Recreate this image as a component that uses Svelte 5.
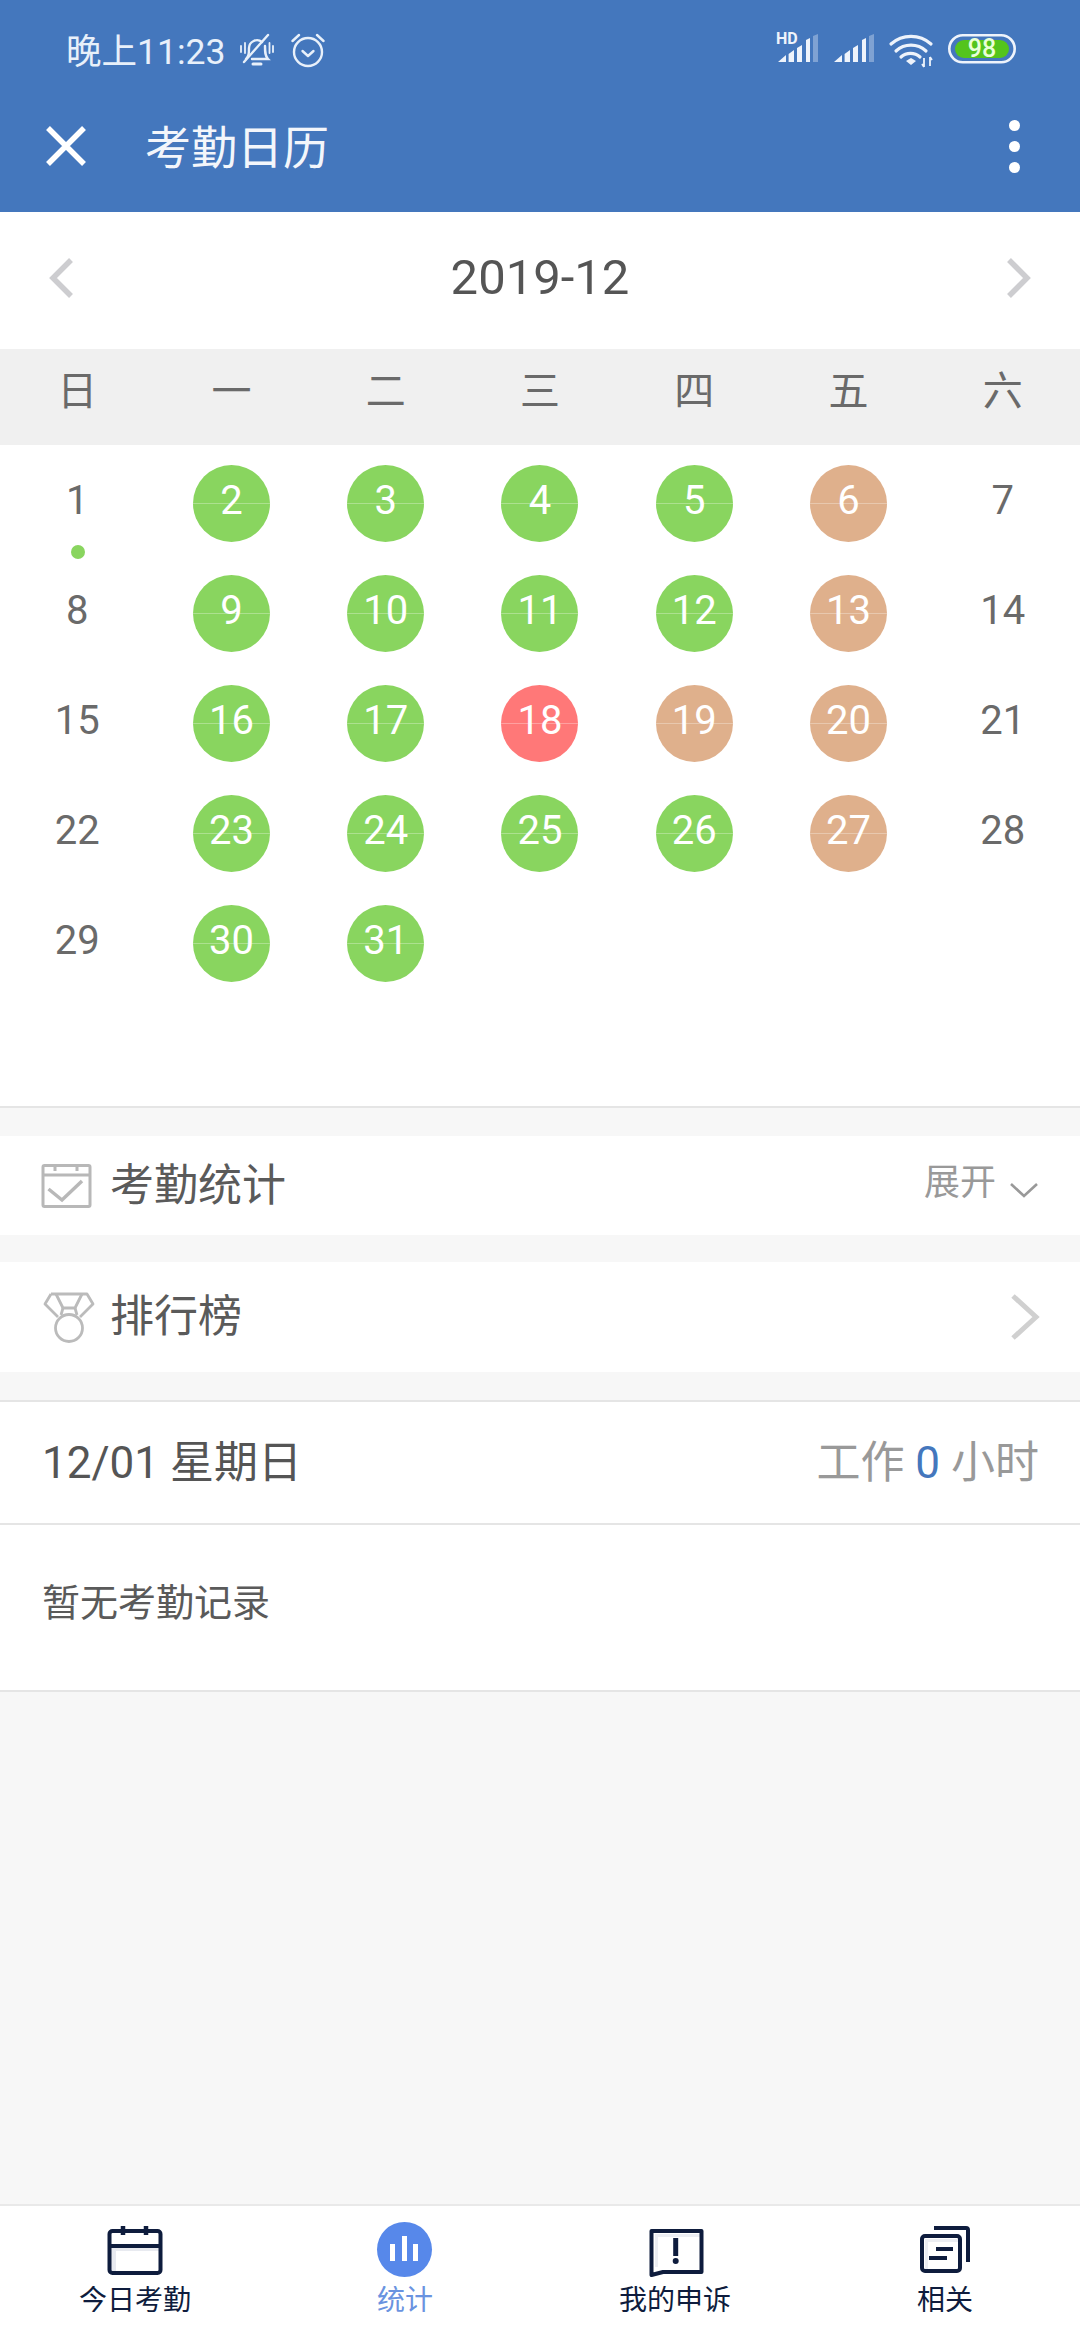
<script>
  const weekdays = ['日', '一', '二', '三', '四', '五', '六'];
  const marks = {
    2:'g',3:'g',4:'g',5:'g',6:'t',9:'g',10:'g',11:'g',12:'g',13:'t',
    16:'g',17:'g',18:'r',19:'t',20:'t',23:'g',24:'g',25:'g',26:'g',27:'t',30:'g',31:'g'
  };
  const days = Array.from({ length: 31 }, (_, i) => i + 1);
</script>

<div class="page">
  <header class="top">
    <div class="status">
      <div class="status-left">
        <span class="clock">晚上11:23</span>
        <svg class="bell" width="34" height="34" viewBox="0 0 34 34" fill="none" stroke="#e8f0fa" stroke-width="2.400" stroke-linecap="round">
          <path d="M6 26c3-3 3-6 3-11a8 8 0 0 1 13-6M25 13c0 6 0 10 3 13H12"/>
          <path d="M13 31h8" stroke-width="3"/>
          <path d="M4 29 28 2"/>
          <path d="M1 13v6M5 10v10M29.500 10v10M33 13v6" stroke-width="1.800"/>
        </svg>
        <svg class="alarm" width="34" height="36" viewBox="0 0 34 36" fill="none" stroke="#e8f0fa" stroke-width="2.400" stroke-linecap="round" stroke-linejoin="round">
          <circle cx="17" cy="20" r="14"/>
          <path d="m11.500 19 5.500 5 5.500-5"/>
          <path d="M1.500 9 8 3M32.500 9 26 3"/>
        </svg>
      </div>
      <svg class="status-right" width="242" height="40" viewBox="0 0 242 40">
        <text x="0" y="14" class="hd">HD</text>
        <g fill="#eef3fb">
          <path d="M2 32l8-7v7zM12.600 24l5.400-4v12h-5.400zM21 18l5-3v17h-5zM30 10l4-2v24h-4z"/>
          <path d="M37 6l5-2v28h-5z" opacity=".35"/>
          <path d="M58 32l8-7v7zM68.600 24l5.400-4v12h-5.400zM77 18l5-3v17h-5zM86 10l4-2v24h-4z"/>
          <path d="M93 6l5-2v28h-5z" opacity=".35"/>
        </g>
        <g fill="none" stroke="#eef3fb" stroke-width="3.200" stroke-linecap="round">
          <path d="M115 14a30 30 0 0 1 40 0"/>
          <path d="M120 21a22 22 0 0 1 30 0"/>
          <path d="M125 27a14 14 0 0 1 19 0"/>
        </g>
        <path d="M130 31l5-3 5 3-5 4z" fill="#eef3fb"/>
        <path d="M148 28v9M146 34l2 3M154 27v9M154 27l2 3" stroke="#eef3fb" stroke-width="1.800" fill="none"/>
        <rect x="173.300" y="5.300" width="65.400" height="27" rx="13.500" fill="none" stroke="#eef3fb" stroke-width="2.600"/>
        <rect x="179" y="10" width="54" height="18" rx="9" fill="#54c41c"/>
        <text x="206" y="27" text-anchor="middle" class="batt">98</text>
      </svg>
    </div>
    <div class="titlebar">
      <svg class="close" width="40" height="40" viewBox="0 0 40 40" stroke="#fff" stroke-width="5.500"><path d="M2 2l36 36M38 2 2 38"/></svg>
      <h1>考勤日历</h1>
      <div class="more"><i></i><i></i><i></i></div>
    </div>
  </header>

  <section class="month">
    <svg width="24" height="40" viewBox="0 0 24 40" fill="none" stroke="#cdcdd0" stroke-width="5.500"><path d="M22 2 4 20l18 18"/></svg>
    <span>2019-12</span>
    <svg width="24" height="40" viewBox="0 0 24 40" fill="none" stroke="#cdcdd0" stroke-width="5.500"><path d="m2 2 18 18L2 38"/></svg>
  </section>

  <div class="weekdays">
    {#each weekdays as w}<span>{w}</span>{/each}
  </div>

  <section class="days">
    {#each days as d}
      <div class="cell">
        <div class="day {marks[d] || ''}"><span>{d}</span></div>
        {#if d === 1}<i class="dot"></i>{/if}
      </div>
    {/each}
  </section>

  <section class="row stats">
    <svg class="row-icon" width="52" height="46" viewBox="0 0 52 46" fill="none" stroke="#b8b8b8" stroke-width="3">
      <rect x="3" y="2.500" width="47" height="41" rx="1.500"/>
      <path d="M3 12h47M15 2v6M37 2v6"/>
      <path d="m8.500 26 13.500 11L42 18" stroke-width="3.500"/>
    </svg>
    <span class="row-title">考勤统计</span>
    <span class="expand">展开</span>
    <svg class="down" width="28" height="16" viewBox="0 0 28 16" fill="none" stroke="#999" stroke-width="2.600"><path d="m1 2 13 12L27 2"/></svg>
  </section>

  <section class="row rank">
    <svg class="row-icon" width="52" height="52" viewBox="0 0 52 52" fill="none" stroke="#bbb" stroke-width="2.800" stroke-linejoin="round">
      <path d="M8 3h36l6 10-13 13M8 3 2 13l13 13"/>
      <path d="M13 3l7 14h12l7-14"/>
      <path d="M20 17l-2 7M32 17l2 7"/>
      <circle cx="26" cy="37" r="13.500"/>
    </svg>
    <span class="row-title">排行榜</span>
    <svg class="next" width="30" height="48" viewBox="0 0 30 48" fill="none" stroke="#d0d0d0" stroke-width="5"><path d="m3 3 23 21L3 45"/></svg>
  </section>

  <section class="record">
    <div class="record-head">
      <span class="date">12/01 星期日</span>
      <span class="hours">工作 <b>0</b> 小时</span>
    </div>
    <div class="record-body">暂无考勤记录</div>
  </section>

  <div class="fill"></div>

  <nav class="tabs">
    <div class="tab">
      <svg width="60" height="60" viewBox="0 0 60 60" fill="none" stroke="#0e1c3d" stroke-width="4">
        <path d="M6 28h48v3H11v21H6z" fill="#e8eaf0" stroke="none"/>
        <rect x="4.500" y="11" width="51" height="42" rx="3"/>
        <path d="M4.500 26h51"/>
        <path d="M18 6v9M41 6v9" stroke-width="4.500"/>
      </svg>
      <span>今日考勤</span>
    </div>
    <div class="tab active">
      <svg width="60" height="60" viewBox="0 0 60 60">
        <circle cx="29.500" cy="29.500" r="27.500" fill="#5788ea"/>
        <path d="M15 24h5v17h-5zM27 16h5v25h-5zM38 24h5v17h-5z" fill="#fff"/>
      </svg>
      <span>统计</span>
    </div>
    <div class="tab">
      <svg width="60" height="60" viewBox="0 0 60 60" fill="none" stroke="#0e1c3d" stroke-width="4" stroke-linejoin="round">
        <path d="M10 14h45v3H13v30h-3z" fill="#eceef3" stroke="none"/>
        <path d="M6.500 11h50v41H18l-11.500 3z"/>
        <path d="M30.700 18v18" stroke-width="5"/>
        <circle cx="30.700" cy="41" r="3" fill="#0e1c3d" stroke="none"/>
      </svg>
      <span>我的申诉</span>
    </div>
    <div class="tab">
      <svg width="60" height="60" viewBox="0 0 60 60" fill="none" stroke="#0e1c3d" stroke-width="4" stroke-linejoin="round">
        <path d="M19 8h32a2 2 0 0 1 2 2v32"/>
        <path d="M10 19h33v3H13v27h-3z" fill="#eceef3" stroke="none"/>
        <rect x="7" y="16" width="38" height="35" rx="3"/>
        <path d="M21 29h17M14 38h18"/>
      </svg>
      <span>相关</span>
    </div>
  </nav>
</div>

<style>
  :global(body) { margin: 0; }
  .page {
    width: 1080px;
    height: 2340px;
    display: flex;
    flex-direction: column;
    background: #f7f7f7;
    overflow: hidden;
    font-family: Roboto, "Noto Sans CJK SC", sans-serif;
    color: #555;
  }
  .top { background: #4477bd; height: 212px; flex: none; }
  .status {
    height: 100px;
    padding: 0 62px 0 66px;
    display: flex;
    align-items: center;
    justify-content: space-between;
    box-sizing: border-box;
  }
  .status-left { display: flex; align-items: center; color: #e8f0fa; }
  .clock { font-size: 35.500px; width: 174px; white-space: nowrap; position: relative; top: -2px; }
  .bell { margin-right: 17px; }
  .hd { font: 700 16px Roboto, sans-serif; fill: #eef3fb; }
  .batt { font: 500 25px Roboto, sans-serif; fill: #eaffd8; }
  .titlebar {
    height: 92px;
    display: flex;
    align-items: center;
    padding: 0 60px 0 46px;
  }
  h1 {
    margin: 0 0 0 59px;
    flex: 1;
    font-size: 46px;
    font-weight: 400;
    position: relative;
    top: -2px;
    color: #f3f6fb;
  }
  .more { display: flex; flex-direction: column; gap: 10px; }
  .more i { display: block; width: 11px; height: 11px; border-radius: 50%; background: #fff; }

  .month {
    height: 137px;
    flex: none;
    background: #fff;
    display: flex;
    align-items: center;
    justify-content: space-between;
    padding: 0 49px 6px 49px;
    box-sizing: border-box;
    font-size: 49px;
  }
  .weekdays {
    height: 96px;
    flex: none;
    background: #f0f0f0;
    display: grid;
    grid-template-columns: repeat(7, 1fr);
    align-items: center;
    justify-items: center;
    font-size: 40px;
    color: #6a6a6a;
  }
  .weekdays span { position: relative; top: -9px; }
  .days {
    height: 663px;
    flex: none;
    box-sizing: border-box;
    background: #fff;
    border-bottom: 2px solid #e5e5e5;
    padding-top: 4px;
    display: grid;
    grid-template-columns: repeat(7, 1fr);
    grid-auto-rows: 110px;
  }
  .cell { position: relative; display: flex; justify-content: center; padding-top: 16px; }
  .day {
    position: relative;
    width: 77px;
    height: 77px;
    border-radius: 50%;
    display: flex;
    align-items: center;
    justify-content: center;
    font-size: 40px;
    color: #6a6a6a;
  }
  .day span { margin-top: -6px; }
  .day.g, .day.t, .day.r { color: #fff; }
  .day.g { background: #89d55f; }
  .day.t { background: #dfb08c; }
  .day.r { background: #ff7878; }
  .day.g::after, .day.t::after, .day.r::after {
    content: "";
    position: absolute;
    left: 0;
    right: 0;
    top: 38px;
    height: 1px;
    background: rgba(255, 255, 255, 0.3);
  }
  .dot {
    position: absolute;
    left: 50%;
    top: 96px;
    width: 14px;
    height: 14px;
    margin-left: -6px;
    border-radius: 50%;
    background: #89d55f;
  }
  .row {
    background: #fff;
    display: flex;
    align-items: center;
    flex: none;
    box-sizing: border-box;
  }
  .row-title { font-size: 44px; color: #5a5a5a; flex: 1; position: relative; top: -4px; }
  .stats { height: 99px; margin-top: 28px; padding: 0 42px 0 40px; }
  .rank { height: 110px; margin-top: 27px; padding: 0 40px 0 43px; }
  .stats .row-title { margin-left: 18px; }
  .rank .row-title { margin-left: 15px; }
  .expand { font-size: 36px; color: #999; margin-right: 14px; position: relative; top: -7px; }
  .down { margin-top: 8px; }
  .record { margin-top: 28px; background: #fff; flex: none; border-top: 2px solid #e5e5e5; border-bottom: 2px solid #e5e5e5; }
  .record-head {
    height: 123px;
    box-sizing: border-box;
    border-bottom: 2px solid #e5e5e5;
    display: flex;
    align-items: center;
    justify-content: space-between;
    padding: 0 41px 8px 42px;
    font-size: 44px;
  }
  .hours { color: #999; }
  .hours b { font-weight: 400; color: #4477bd; }
  .record-body {
    height: 165px;
    box-sizing: border-box;
    padding: 50px 42px 0;
    font-size: 38px;
    line-height: 56px;
    color: #5a5a5a;
  }
  .fill { flex: 1; }
  .tabs {
    height: 136px;
    flex: none;
    box-sizing: border-box;
    background: #fff;
    border-top: 2px solid #e9e9e9;
    display: grid;
    grid-template-columns: repeat(4, 1fr);
    padding-top: 14px;
    overflow: hidden;
  }
  .tab { display: flex; flex-direction: column; align-items: center; color: #0e1c3d; font-size: 28px; }
  .tab svg { display: block; }
  .tab span { height: 26px; margin-top: 6px; line-height: 30px; overflow: hidden; white-space: nowrap; }
  .tab.active span { color: #6a93e0; }
</style>
